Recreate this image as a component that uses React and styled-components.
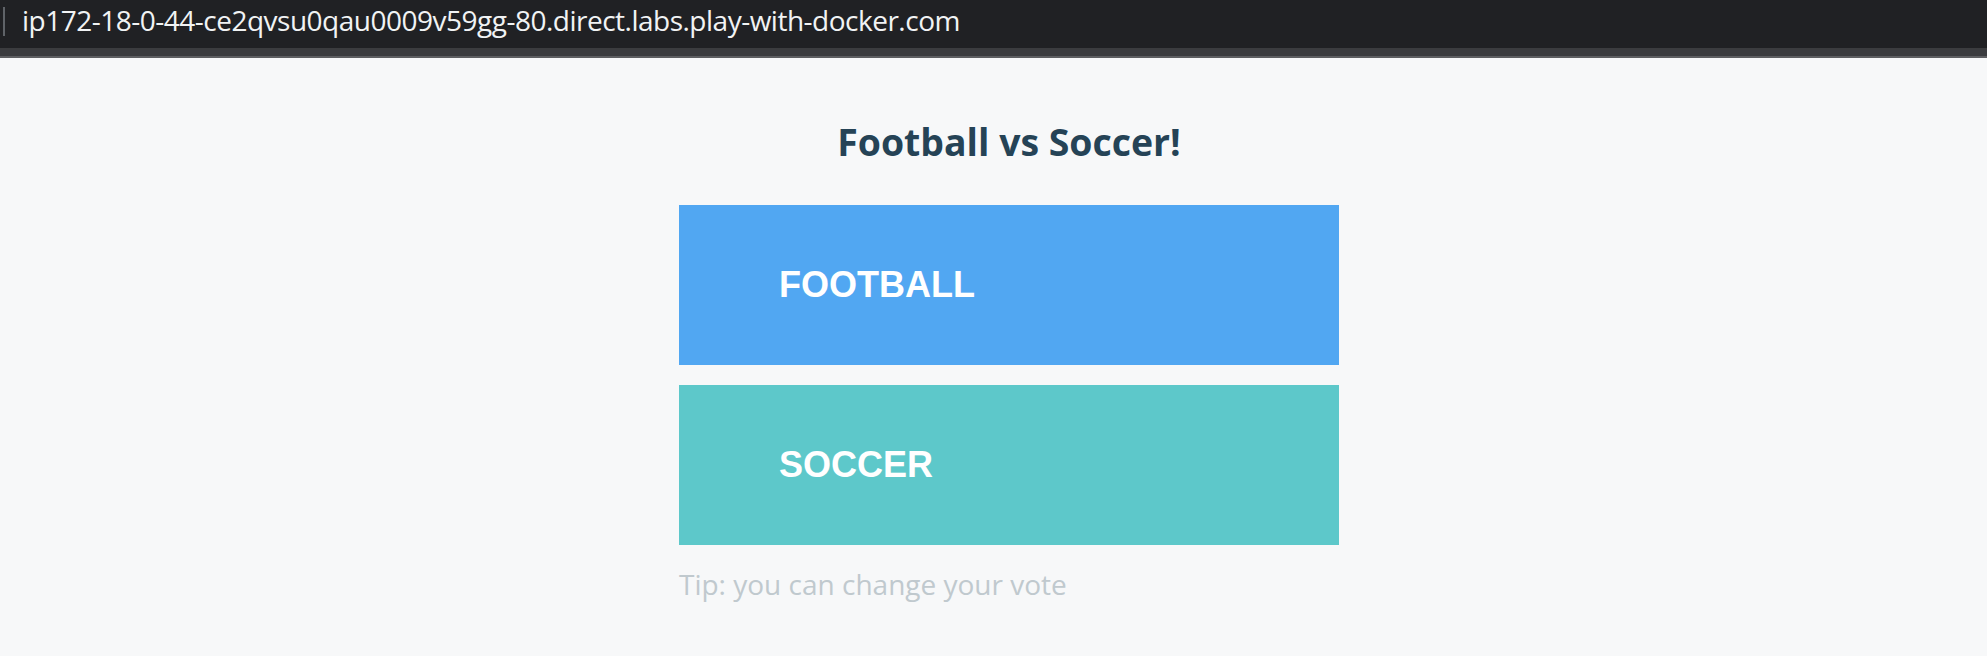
import styled, { createGlobalStyle } from "styled-components";

const GlobalStyle = createGlobalStyle`
  * { box-sizing: border-box; }
  html, body {
    margin: 0;
    padding: 0;
    background: #f7f8f9;
    overflow: hidden;
  }
`;

const AddressBar = styled.div`
  height: 48px;
  background: #202124;
  display: flex;
  align-items: flex-start;
`;

const Divider = styled.span`
  flex: none;
  width: 2px;
  height: 29px;
  margin: 7px 0 0 3px;
  background: #5f6368;
`;

const Url = styled.span`
  margin: 1px 0 0 17px;
  color: #f1f3f4;
  font-family: "Open Sans", "Noto Sans", sans-serif;
  font-size: 28px;
  letter-spacing: -0.5px;
  line-height: 38px;
  white-space: nowrap;
`;

const Band = styled.div`
  height: 10px;
  background: #3b3c3f;
  border-bottom: 2px solid #5e5f62;
`;

const Page = styled.main`
  padding: 21px 0 0 679px;
  font-family: "Open Sans", "Noto Sans", sans-serif;
`;

const Column = styled.div`
  width: 660px;
  display: flex;
  flex-direction: column;
`;

const Title = styled.h3`
  margin: 37px 0 38px;
  text-align: center;
  font-size: 37.44px;
  font-weight: 700;
  color: #254356;
  line-height: 51px;
`;

const Choices = styled.form`
  display: flex;
  flex-direction: column;
  gap: 20px;
  margin: 0;
`;

const VoteButton = styled.button`
  height: 160px;
  width: 660px;
  border: none;
  border-radius: 0;
  background: ${({ $color }) => $color};
  color: #ffffff;
  text-transform: uppercase;
  text-align: left;
  padding: 0 0 0 100px;
  font-family: "Liberation Sans", Arial, sans-serif;
  font-size: 36px;
  font-weight: 700;
  cursor: pointer;
`;

const Tip = styled.div`
  margin-top: 20px;
  text-align: left;
  color: #c0c9ce;
  font-size: 28px;
`;

export default function App() {
  return (
    <>
      <GlobalStyle />
      <AddressBar>
        <Divider />
        <Url>ip172-18-0-44-ce2qvsu0qau0009v59gg-80.direct.labs.play-with-docker.com</Url>
      </AddressBar>
      <Band />
      <Page>
        <Column>
          <Title>Football vs Soccer!</Title>
          <Choices onSubmit={(e) => e.preventDefault()}>
            <VoteButton type="submit" $color="#51a7f2">Football</VoteButton>
            <VoteButton type="submit" $color="#5dc8ca">Soccer</VoteButton>
          </Choices>
          <Tip>Tip: you can change your vote</Tip>
        </Column>
      </Page>
    </>
  );
}
